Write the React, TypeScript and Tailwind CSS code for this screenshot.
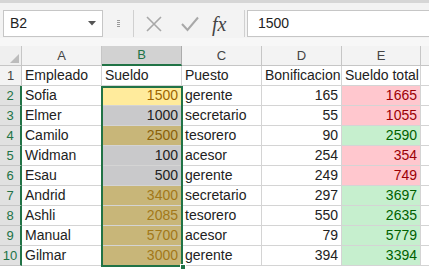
import React from "react";

type Cell = { v: string; right?: boolean; cls?: string };

const rows: Cell[][] = [
  [{ v: "Empleado" }, { v: "Sueldo" }, { v: "Puesto" }, { v: "Bonificacion" }, { v: "Sueldo total" }],
  [{ v: "Sofia" }, { v: "1500", right: true, cls: "bg-[#ffeb9c] text-[#9c6500]" }, { v: "gerente" }, { v: "165", right: true }, { v: "1665", right: true, cls: "bg-[#ffc7ce] text-[#9c0006]" }],
  [{ v: "Elmer" }, { v: "1000", right: true, cls: "bg-[#c9c9cb] text-[#222]" }, { v: "secretario" }, { v: "55", right: true }, { v: "1055", right: true, cls: "bg-[#ffc7ce] text-[#9c0006]" }],
  [{ v: "Camilo" }, { v: "2500", right: true, cls: "bg-[#c8b679] text-[#8a6008]" }, { v: "tesorero" }, { v: "90", right: true }, { v: "2590", right: true, cls: "bg-[#c6efce] text-[#006100]" }],
  [{ v: "Widman" }, { v: "100", right: true, cls: "bg-[#c9c9cb] text-[#222]" }, { v: "acesor" }, { v: "254", right: true }, { v: "354", right: true, cls: "bg-[#ffc7ce] text-[#9c0006]" }],
  [{ v: "Esau" }, { v: "500", right: true, cls: "bg-[#c9c9cb] text-[#222]" }, { v: "gerente" }, { v: "249", right: true }, { v: "749", right: true, cls: "bg-[#ffc7ce] text-[#9c0006]" }],
  [{ v: "Andrid" }, { v: "3400", right: true, cls: "bg-[#c8b679] text-[#a27818]" }, { v: "secretario" }, { v: "297", right: true }, { v: "3697", right: true, cls: "bg-[#c6efce] text-[#006100]" }],
  [{ v: "Ashli" }, { v: "2085", right: true, cls: "bg-[#c8b679] text-[#a27818]" }, { v: "tesorero" }, { v: "550", right: true }, { v: "2635", right: true, cls: "bg-[#c6efce] text-[#006100]" }],
  [{ v: "Manual" }, { v: "5700", right: true, cls: "bg-[#c8b679] text-[#a27818]" }, { v: "acesor" }, { v: "79", right: true }, { v: "5779", right: true, cls: "bg-[#c6efce] text-[#006100]" }],
  [{ v: "Gilmar" }, { v: "3000", right: true, cls: "bg-[#c8b679] text-[#a27818]" }, { v: "gerente" }, { v: "394", right: true }, { v: "3394", right: true, cls: "bg-[#c6efce] text-[#006100]" }],
];

const cols = ["A", "B", "C", "D", "E"];

export default function App() {
  return (
    <div
      className="relative w-[429px] h-[270px] overflow-hidden bg-white text-[#222]"
      style={{ fontFamily: '"Liberation Sans", Arial, sans-serif' }}
    >
      {/* formula bar */}
      <div className="h-[46px] bg-[#f3f3f3] border-t-[3px] border-[#d6d6d6] flex flex-col">
        <div className="flex items-center h-[35px] pt-[6px]">
          <div className="ml-[3px] w-[100px] h-[27px] bg-white border border-[#c6c6c6] flex items-center justify-between px-[6px] text-[14px]">
            <span>B2</span>
            <svg width="8" height="5" viewBox="0 0 8 5">
              <path d="M0 0 L8 0 L4 4.5 Z" fill="#555" />
            </svg>
          </div>
          <div className="w-[30px] flex justify-center">
            <div className="flex flex-col gap-[1px]">
              {[0, 1, 2, 3].map((i) => (
                <div key={i} className="w-[3px] h-[1px] bg-[#9a9a9a]" />
              ))}
            </div>
          </div>
          <div className="w-[1px] h-[27px] bg-[#d0d0d0]" />
          <div className="w-[110px] h-[27px] flex items-center">
            <svg width="16" height="16" viewBox="0 0 16 16" className="ml-[12px]">
              <path d="M1 1 L15 15 M15 1 L1 15" stroke="#a8a8a8" strokeWidth="1.6" />
            </svg>
            <svg width="18" height="16" viewBox="0 0 18 16" className="ml-[19px]">
              <path d="M1 8 L6.5 14 L17 1.5" stroke="#a8a8a8" strokeWidth="2" fill="none" />
            </svg>
            <span
              className="ml-[13px] text-[20px] italic text-[#444] leading-none"
              style={{ fontFamily: '"Liberation Serif", "Times New Roman", serif' }}
            >
              fx
            </span>
          </div>
          <div className="w-[1px] h-[27px] bg-[#d0d0d0]" />
          <div className="ml-[2px] flex-1 h-[27px] bg-white border-y border-l border-[#c6c6c6] flex items-center pl-[10px] text-[14px]">
            1500
          </div>
        </div>
        <div className="flex-1 bg-[#f7f7f7]" />
      </div>

      {/* grid */}
      <div className="grid grid-cols-[22px_80px_80px_80px_80px_79px_1fr] text-[14px]">
        <div className="relative h-[20px] bg-[#efefef] border-r border-b border-[#c6c6c6]">
          <svg width="9" height="9" viewBox="0 0 9 9" className="absolute right-[2px] bottom-[2px]">
            <path d="M9 0 L9 9 L0 9 Z" fill="#bcbcbc" />
          </svg>
        </div>
        {cols.map((c) =>
          c === "B" ? (
            <div
              key={c}
              className="h-[20px] bg-[#d2d2d2] border-r border-[#ababab] border-b-2 border-b-[#217346] flex items-center justify-center text-[#217346] text-[13px]"
            >
              {c}
            </div>
          ) : (
            <div
              key={c}
              className="h-[20px] bg-[#f3f3f3] border-r border-b border-[#c6c6c6] flex items-center justify-center text-[#444] text-[13px]"
            >
              {c}
            </div>
          )
        )}
        <div className="h-[20px] bg-[#f3f3f3] border-b border-[#c6c6c6]" />

        {rows.map((r, ri) => (
          <React.Fragment key={ri}>
            <div
              className={
                ri === 0
                  ? "h-[20px] bg-[#f3f3f3] border-r border-b border-[#c6c6c6] flex items-center justify-center text-[13px] text-[#444]"
                  : "h-[20px] bg-[#e1e1e1] border-r-2 border-r-[#217346] border-b border-b-[#c6c6c6] flex items-center justify-center text-[13px] text-[#217346]"
              }
            >
              {ri + 1}
            </div>
            {r.map((c, ci) => (
              <div
                key={ci}
                className={
                  "h-[20px] border-r border-b border-[#d4d4d4] flex items-center px-[3px] whitespace-nowrap overflow-hidden " +
                  (c.right ? "justify-end " : "justify-start ") +
                  (c.cls ?? "")
                }
              >
                {c.v}
              </div>
            ))}
            <div className="h-[20px] border-b border-[#d4d4d4]" />
          </React.Fragment>
        ))}
      </div>

      {/* selection */}
      <div className="absolute left-[101px] top-[86px] w-[82px] h-[181px] border-2 border-[#217346] pointer-events-none" />
      <div className="absolute left-[180px] top-[264px] w-[6px] h-[6px] bg-[#217346] border border-white" />
    </div>
  );
}
